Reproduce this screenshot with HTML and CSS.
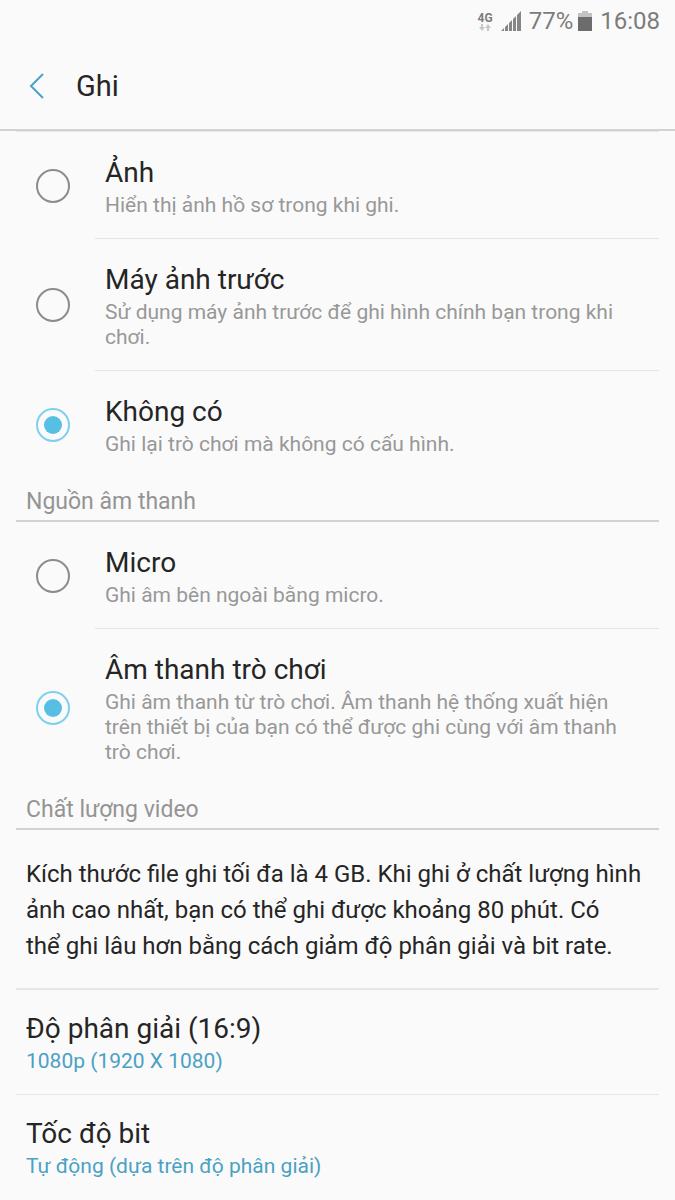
FILE: index.html
```html
<!DOCTYPE html>
<html lang="vi">
<head>
  <meta charset="UTF-8">
  <meta name="viewport" content="width=device-width, initial-scale=1.0">
  <title>Ghi</title>
  <link rel="stylesheet" href="styles.css">
</head>
<body>
  <div class="status-bar">
    <div class="network">
      <span class="network-type">4G</span>
      <svg class="network-arrows" width="12" height="7" viewBox="0 0 12 7">
        <path d="M2 0h2v3h2L3 7 0 3h2zM8 7h2V4h2L9 0 6 4h2z" fill="#c8c8c8"/>
      </svg>
    </div>
    <svg class="signal" width="20" height="20" viewBox="0 0 20 20">
      <path d="M0 20l3-3v3zM4 20v-4l3-3v7zM8 20v-8l3-3v11zM12 20V8l3-3v15zM16 20V4l4-4v20z" fill="#868686"/>
    </svg>
    <span class="battery-level">77%</span>
    <svg class="battery" width="14" height="20" viewBox="0 0 14 20">
      <path d="M4 0h6v2h4v4H0V2h4z" fill="#c2c2c2"/>
      <path d="M0 6h14v14H0z" fill="#6c6c6c"/>
    </svg>
    <span>16:08</span>
  </div>

  <header class="header">
    <button type="button" class="back" aria-label="Quay lại">
      <svg width="18" height="28" viewBox="0 0 18 28">
        <path d="M15 2L3 14l12 12" fill="none" stroke="#46a2c8" stroke-width="2"/>
      </svg>
    </button>
    <h1>Ghi</h1>
  </header>

  <main class="content">
    <div class="options options-first">
      <div class="option">
        <input type="radio" name="profile" id="profile-photo">
        <label for="profile-photo">
          <span class="title">Ảnh</span>
          <span class="desc">Hiển thị ảnh hồ sơ trong khi ghi.</span>
        </label>
      </div>
      <div class="option">
        <input type="radio" name="profile" id="profile-camera">
        <label for="profile-camera">
          <span class="title">Máy ảnh trước</span>
          <span class="desc">Sử dụng máy ảnh trước để ghi hình chính bạn trong khi chơi.</span>
        </label>
      </div>
      <div class="option">
        <input type="radio" name="profile" id="profile-none" checked>
        <label for="profile-none">
          <span class="title">Không có</span>
          <span class="desc">Ghi lại trò chơi mà không có cấu hình.</span>
        </label>
      </div>
    </div>

    <h2>Nguồn âm thanh</h2>
    <div class="options">
      <div class="option">
        <input type="radio" name="audio" id="audio-mic">
        <label for="audio-mic">
          <span class="title">Micro</span>
          <span class="desc">Ghi âm bên ngoài bằng micro.</span>
        </label>
      </div>
      <div class="option">
        <input type="radio" name="audio" id="audio-game" checked>
        <label for="audio-game">
          <span class="title">Âm thanh trò chơi</span>
          <span class="desc">Ghi âm thanh từ trò chơi. Âm thanh hệ thống xuất hiện trên thiết bị của bạn có thể được ghi cùng với âm thanh trò chơi.</span>
        </label>
      </div>
    </div>

    <h2>Chất lượng video</h2>
    <p class="note">Kích thước file ghi tối đa là 4 GB. Khi ghi ở chất lượng hình ảnh cao nhất, bạn có thể ghi được khoảng 80 phút. Có thể&nbsp;ghi lâu hơn bằng cách giảm độ phân giải và bit rate.</p>

    <button type="button" class="setting">
      <span class="title">Độ phân giải (16:9)</span>
      <span class="value">1080p (1920 X 1080)</span>
    </button>
    <button type="button" class="setting">
      <span class="title">Tốc độ bit</span>
      <span class="value">Tự động (dựa trên độ phân giải)</span>
    </button>
  </main>
</body>
</html>
```
FILE: styles.css
```css
* {
  box-sizing: border-box;
}
body {
  margin: 0;
  background: #fafafa;
  color: #252525;
  font-family: Roboto, "Noto Sans", sans-serif;
}
.status-bar {
  display: flex;
  justify-content: flex-end;
  align-items: center;
  height: 42px;
  padding-right: 15px;
  color: #7c7c7c;
  font-size: 24px;
}
.network {
  display: flex;
  flex-direction: column;
  align-items: center;
  margin-right: 8px;
}
.network-type {
  font-size: 12px;
  line-height: 12px;
  font-weight: bold;
}
.signal {
  margin-right: 8px;
}
.battery-level {
  margin-right: 5px;
}
.battery {
  margin-right: 8px;
}
.header {
  display: flex;
  align-items: center;
  height: 89px;
  padding: 0 28px;
  border-bottom: 2px solid #d2d2d2;
}
.back {
  display: flex;
  width: 48px;
  padding: 0;
  border: none;
  background: none;
  cursor: pointer;
}
h1 {
  margin: 0;
  font-size: 29px;
  font-weight: normal;
}
.content {
  padding: 0 16px;
}
.options-first {
  border-top: 1px solid #e6e6e6;
}
.option {
  display: flex;
  align-items: center;
}
.option input {
  flex: none;
  appearance: none;
  width: 34px;
  height: 34px;
  margin: 0 25px 0 20px;
  border: 2px solid #8c8c8c;
  border-radius: 50%;
}
.option input:checked {
  padding: 6px;
  border-color: #7fd0ed;
  background: #57bfe4 content-box;
}
.option label {
  flex: 1;
  padding: 22px 20px 20px 10px;
  border-bottom: 1px solid #e4e4e4;
}
.option:last-child label {
  border-bottom-color: transparent;
}
.title {
  display: block;
  margin-bottom: 2px;
  font-size: 28px;
  line-height: 37px;
}
.desc,
.value {
  display: block;
  font-size: 21px;
  line-height: 25px;
}
.desc {
  color: #989898;
}
.value {
  color: #4ba1c3;
}
h2 {
  margin: 0;
  padding: 9px 10px 3px;
  border-bottom: 2px solid #d2d2d2;
  color: #949494;
  font-size: 23px;
  line-height: 30px;
  font-weight: normal;
}
.note {
  margin: 0;
  padding: 26px 10px 24px;
  font-size: 24px;
  line-height: 36px;
}
.setting {
  display: block;
  width: 100%;
  padding: 20px 10px;
  border: none;
  border-top: 2px solid #e6e6e6;
  background: none;
  color: inherit;
  font-family: inherit;
  text-align: left;
  cursor: pointer;
}
.setting + .setting {
  border-top-width: 1px;
}
```
